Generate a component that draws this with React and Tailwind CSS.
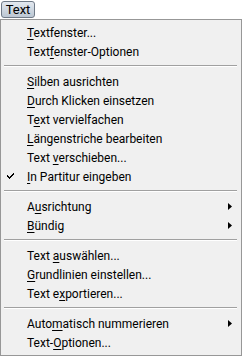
const items = [
  { pre: '', u: 'T', post: 'extfenster...' },
  { pre: 'Text', u: 'f', post: 'enster-Optionen' },
  { sep: true },
  { pre: '', u: 'S', post: 'ilben ausrichten' },
  { pre: '', u: 'D', post: 'urch Klicken einsetzen' },
  { pre: 'T', u: 'e', post: 'xt vervielfachen' },
  { pre: '', u: 'L', post: 'ängenstriche bearbeiten' },
  { pre: 'Text ', u: 'v', post: 'erschieben...' },
  { pre: '', u: 'I', post: 'n Partitur eingeben', checked: true },
  { sep: true },
  { pre: 'A', u: 'u', post: 'srichtung', sub: true },
  { pre: '', u: 'B', post: 'ündig', sub: true },
  { sep: true },
  { pre: 'Text ', u: 'a', post: 'uswählen...' },
  { pre: '', u: 'G', post: 'rundlinien einstellen...' },
  { pre: 'Text e', u: 'x', post: 'portieren...' },
  { sep: true },
  { pre: 'Auto', u: 'm', post: 'atisch nummerieren', sub: true },
  { pre: 'Text-', u: 'O', post: 'ptionen...' },
];

const Check = () => (
  <svg width="7" height="7" viewBox="0 0 7 7" className="block">
    <path d="M0 2h1v1h1v1h1V3h1V2h1V1h1V0h1v2H6v1H5v1H4v1H3v1H2V5H1V4H0z" fill="#000" />
  </svg>
);

const Arrow = () => (
  <svg width="4" height="7" viewBox="0 0 4 7" className="block">
    <path d="M0 0L4 3.5L0 7z" fill="#000" />
  </svg>
);

export default function App() {
  return (
    <div className="w-[242px] h-[357px] bg-white overflow-hidden font-['Roboto',sans-serif] text-[12px] leading-none text-black">
      <div className="h-[19px] pl-[1px] pt-[1px]">
        <div className="w-[34px] h-[17px] rounded-[3px] border border-[#6f7a87] bg-gradient-to-b from-[#e3e9f0] to-[#bcc7d3] flex items-center justify-center text-[13px]">
          Text
        </div>
      </div>
      <div className="border border-[#979797] bg-[#f0f0f0] pt-[3px] pb-[3px]">
        {items.map((it, i) =>
          it.sep ? (
            <div key={i} className="h-[11px] pt-[4px] pl-[3px] pr-[4px]">
              <div className="w-full h-[2px] border-t border-[#a0a0a0] border-b border-b-white" />
            </div>
          ) : (
            <div key={i} className="h-[19px] flex items-center relative pl-[26px] pr-[9px]">
              {it.checked && (
                <div className="absolute left-[6px] top-[6px]">
                  <Check />
                </div>
              )}
              <span className="whitespace-pre">
                {it.pre}
                <span className="underline underline-offset-2">{it.u}</span>
                {it.post}
              </span>
              {it.sub && (
                <div className="ml-auto">
                  <Arrow />
                </div>
              )}
            </div>
          )
        )}
      </div>
    </div>
  );
}
